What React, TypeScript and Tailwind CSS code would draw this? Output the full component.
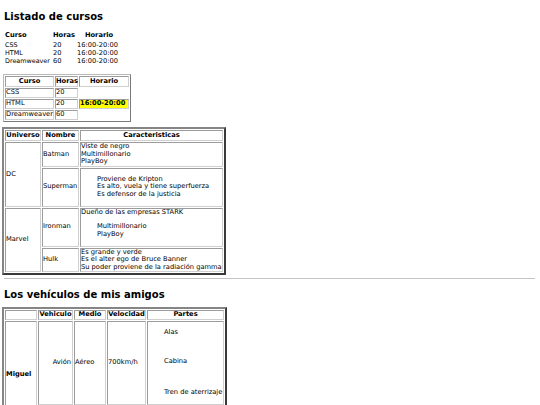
const cell = "border border-t-[#9c9c9c] border-l-[#9c9c9c] border-r-[#cfcfcf] border-b-[#cfcfcf] p-0";
const head = `${cell} font-bold text-center`;

function CourseList() {
  const rows = [
    ["CSS", "20", "16:00-20:00"],
    ["HTML", "20", "16:00-20:00"],
    ["Dreamweaver", "60", "16:00-20:00"],
  ];
  return (
    <div className="ml-[5px] mt-[8.5px] grid grid-cols-[48px_24px_44px] grid-rows-[10px_8px_8px_8px] leading-[8px]">
      <span className="font-bold">Curso</span>
      <span className="font-bold">Horas</span>
      <span className="font-bold text-center">Horario</span>
      {rows.map((r) =>
        r.map((c, i) => (
          <span key={r[0] + i} className={i === 0 ? "text-[6.4px]" : ""}>
            {c}
          </span>
        ))
      )}
    </div>
  );
}

function CourseTable() {
  return (
    <table className="ml-[3px] mt-[9px] w-[128px] table-fixed border-separate border-spacing-[1px] border border-t-[#b8b8b8] border-l-[#b8b8b8] border-r-[#7a7a7a] border-b-[#7a7a7a]">
      <tbody>
        <tr className="h-[11px]">
          <th className={`${head} w-[49px]`}>Curso</th>
          <th className={`${head} w-[23px]`}>Horas</th>
          <th className={`${head} w-[50px]`}>Horario</th>
        </tr>
        <tr className="h-[10px]">
          <td className={cell}>CSS</td>
          <td className={cell}>20</td>
          <td />
        </tr>
        <tr className="h-[10px]">
          <td className={cell}>HTML</td>
          <td className={cell}>20</td>
          <td className={`${cell} bg-[#ffff00] font-bold`}>16:00-20:00</td>
        </tr>
        <tr className="h-[10px]">
          <td className={`${cell} whitespace-nowrap`}>Dreamweaver</td>
          <td className={cell}>60</td>
          <td />
        </tr>
      </tbody>
    </table>
  );
}

function HeroTable() {
  return (
    <table className="ml-[2px] mt-[5px] w-[224px] table-fixed border-separate border-spacing-[1px] border-2 border-t-[#858585] border-l-[#858585] border-r-[#3a3a3a] border-b-[#3a3a3a]">
      <tbody>
        <tr className="h-[11px]">
          <th className={`${head} w-[36px]`}>Universo</th>
          <th className={`${head} w-[37px]`}>Nombre</th>
          <th className={`${head} w-[143px]`}>Caracteristicas</th>
        </tr>
        <tr>
          <td className={cell} rowSpan={2}>DC</td>
          <td className={cell}>Batman</td>
          <td className={cell}>
            Viste de negro
            <br />
            Multimillonario
            <br />
            PlayBoy
          </td>
        </tr>
        <tr>
          <td className={cell}>Superman</td>
          <td className={cell}>
            <ul className="my-[7.3px] pl-[16px]">
              <li>Proviene de Kripton</li>
              <li>Es alto, vuela y tiene superfuerza</li>
              <li>Es defensor de la justicia</li>
            </ul>
          </td>
        </tr>
        <tr>
          <td className={cell} rowSpan={2}>Marvel</td>
          <td className={cell}>Ironman</td>
          <td className={cell}>
            <p>Dueño de las empresas STARK</p>
            <ul className="my-[7.3px] pl-[16px]">
              <li>Multimillonario</li>
              <li>PlayBoy</li>
            </ul>
          </td>
        </tr>
        <tr>
          <td className={cell}>Hulk</td>
          <td className={cell}>
            Es grande y verde
            <br />
            Es el alter ego de Bruce Banner
            <br />
            Su poder proviene de la radiación gamma
          </td>
        </tr>
      </tbody>
    </table>
  );
}

function VehicleTable() {
  return (
    <table className="ml-[2px] mt-[6.5px] w-[225px] table-fixed border-separate border-spacing-[1px] border-2 border-t-[#858585] border-l-[#858585] border-r-[#3a3a3a] border-b-[#3a3a3a]">
      <tbody>
        <tr className="h-[10px]">
          <th className={`${head} w-[32px]`}></th>
          <th className={`${head} w-[35px]`}>Vehiculo</th>
          <th className={`${head} w-[32px]`}>Medio</th>
          <th className={`${head} w-[39px]`}>Velocidad</th>
          <th className={`${head} w-[77px]`}>Partes</th>
        </tr>
        <tr>
          <td className={`${cell} font-bold`} rowSpan={2}>Miguel</td>
          <td className={`${cell} text-right pr-[1px]`}>Avión</td>
          <td className={cell}>Aéreo</td>
          <td className={cell}>700km/h</td>
          <td className={cell}>
            <ul className="my-[7.3px] pl-[16px]">
              <li>Alas</li>
              <li className="mt-[21px]">Cabina</li>
              <li className="mt-[24px] whitespace-nowrap">Tren de aterrizaje</li>
            </ul>
          </td>
        </tr>
        {/* next row sits below the fold; kept empty so Miguel spans past it */}
        <tr className="h-[23px]">
          <td className={cell} />
          <td className={cell} />
          <td className={cell} />
          <td className={cell} />
        </tr>
      </tbody>
    </table>
  );
}

export default function App() {
  return (
    <div className="h-[405px] overflow-hidden bg-white text-black font-['DejaVu_Sans',Verdana,sans-serif] text-[6.7px] leading-[7.5px]">
      <h1 className="ml-[4px] pt-[10.5px] text-[10px] leading-[12px] font-bold">Listado de cursos</h1>
      <CourseList />
      <CourseTable />
      <HeroTable />
      <hr className="ml-[4px] mr-[5px] mt-[3px] border-0 border-t border-[#c4c4c4]" />
      <h2 className="ml-[4px] mt-[9.5px] text-[10px] leading-[12px] font-bold">Los vehículos de mis amigos</h2>
      <VehicleTable />
    </div>
  );
}
